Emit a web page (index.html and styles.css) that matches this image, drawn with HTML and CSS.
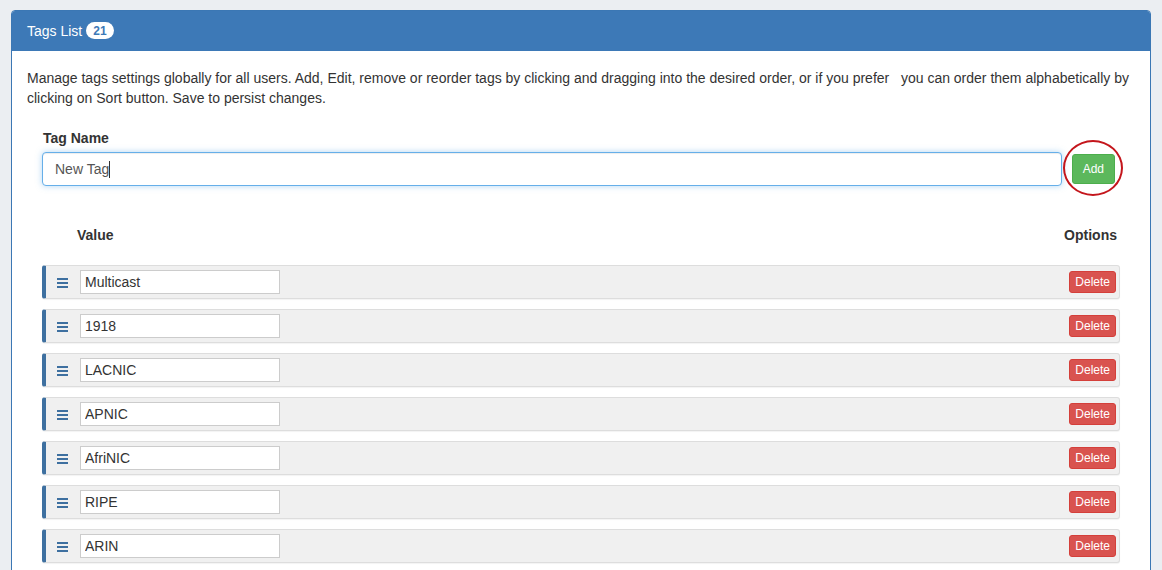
FILE: index.html
```html
<!DOCTYPE html>
<html lang="en">
<head>
    <meta charset="UTF-8">
    <meta name="viewport" content="width=device-width, initial-scale=1.0">
    <title>Tags List</title>
    <link rel="stylesheet" href="styles.css">
</head>
<body>
    <div class="panel">
        <div class="panel-heading">
            Tags List<span class="badge">21</span>
        </div>
        <div class="panel-body">
            <p class="intro">Manage tags settings globally for all users. Add, Edit, remove or reorder tags by clicking and dragging into the desired order, or if you prefer &nbsp; you can order them alphabetically by clicking on Sort button. Save to persist changes.</p>
            <div class="tags-form">
                <label for="tagName">Tag Name</label>
                <div class="add-row">
                    <div class="tag-input">
                        <input type="text" id="tagName" value="New Tag">
                        <span class="caret"></span>
                    </div>
                    <div class="add-wrap">
                        <button class="btn btn-add">Add</button>
                        <span class="highlight"></span>
                    </div>
                </div>

                <div class="list-header">
                    <span>Value</span>
                    <span>Options</span>
                </div>

                <ul class="tag-list">
                    <li class="tag-item">
                        <span class="handle"><span></span><span></span><span></span></span>
                        <input type="text" class="tag-value" value="Multicast">
                        <button class="btn btn-delete">Delete</button>
                    </li>
                    <li class="tag-item">
                        <span class="handle"><span></span><span></span><span></span></span>
                        <input type="text" class="tag-value" value="1918">
                        <button class="btn btn-delete">Delete</button>
                    </li>
                    <li class="tag-item">
                        <span class="handle"><span></span><span></span><span></span></span>
                        <input type="text" class="tag-value" value="LACNIC">
                        <button class="btn btn-delete">Delete</button>
                    </li>
                    <li class="tag-item">
                        <span class="handle"><span></span><span></span><span></span></span>
                        <input type="text" class="tag-value" value="APNIC">
                        <button class="btn btn-delete">Delete</button>
                    </li>
                    <li class="tag-item">
                        <span class="handle"><span></span><span></span><span></span></span>
                        <input type="text" class="tag-value" value="AfriNIC">
                        <button class="btn btn-delete">Delete</button>
                    </li>
                    <li class="tag-item">
                        <span class="handle"><span></span><span></span><span></span></span>
                        <input type="text" class="tag-value" value="RIPE">
                        <button class="btn btn-delete">Delete</button>
                    </li>
                    <li class="tag-item">
                        <span class="handle"><span></span><span></span><span></span></span>
                        <input type="text" class="tag-value" value="ARIN">
                        <button class="btn btn-delete">Delete</button>
                    </li>
                </ul>
            </div>
        </div>
    </div>
</body>
</html>
```

FILE: styles.css
```css
body {
    margin: 0;
    padding: 10px 10px 0 11px;
    background-color: #ebeef2;
    font-family: "Liberation Sans", Arial, Helvetica, sans-serif;
    font-size: 14px;
    line-height: 20px;
    color: #333;
}
.panel {
    width: 1140px;
    box-sizing: border-box;
    background-color: #fff;
    border: 1px solid #3b77b4;
    border-radius: 4px 4px 0 0;
}
.panel-heading {
    background-color: #3d79b7;
    color: #fff;
    padding: 10px 15px 10px 15px;
    border-radius: 3px 3px 0 0;
}
.badge {
    display: inline-block;
    margin-left: 4px;
    padding: 2px 7px 1px;
    background-color: #fff;
    color: #3d79b7;
    font-size: 12px;
    font-weight: bold;
    line-height: 14px;
    border-radius: 10px;
    vertical-align: 1px;
}
.panel-body {
    padding: 17px 15px 15px;
}
.intro {
    margin: 0 0 20px 0;
}
.tags-form {
    padding: 0 15px;
}
label {
    display: block;
    font-weight: bold;
    margin-bottom: 4px;
    margin-left: 1px;
}
.add-row {
    display: flex;
    align-items: center;
    gap: 10px;
}
.tag-input {
    position: relative;
    flex: 1;
}
.tag-input input {
    display: block;
    width: 100%;
    height: 34px;
    box-sizing: border-box;
    padding: 6px 12px;
    font-family: inherit;
    font-size: 14px;
    color: #555;
    border: 1px solid #66afe9;
    border-radius: 4px;
    outline: none;
    box-shadow: inset 0 1px 1px rgba(0, 0, 0, .075), 0 0 6px rgba(102, 175, 233, .5);
}
.caret {
    position: absolute;
    left: 67px;
    top: 9px;
    width: 1px;
    height: 17px;
    background-color: #333;
}
.add-wrap {
    position: relative;
    margin-right: 5px;
}
.btn {
    display: block;
    font-family: inherit;
    color: #fff;
    cursor: pointer;
    border-radius: 3px;
}
.btn-add {
    height: 30px;
    padding: 5px 10px;
    font-size: 12px;
    line-height: 18px;
    background-color: #5cb85c;
    border: 1px solid #4cae4c;
}
.highlight {
    position: absolute;
    left: -9px;
    top: -14px;
    width: 56px;
    height: 52px;
    border: 2px solid #c4161c;
    border-radius: 50%;
}
.list-header {
    display: flex;
    justify-content: space-between;
    margin-top: 28px;
    padding: 11px 3px 9px 35px;
    font-weight: bold;
}
.tag-list {
    list-style: none;
    margin: 11px 0 0 0;
    padding: 0;
}
.tag-item {
    display: flex;
    align-items: center;
    height: 34px;
    box-sizing: border-box;
    margin-bottom: 10px;
    padding: 0 3px 0 11px;
    background-color: #f0f0f0;
    border: 1px solid #ddd;
    border-left: 4px solid #3e70a0;
    border-radius: 3px;
    box-shadow: 0 1px 1px rgba(0, 0, 0, .05);
}
.handle {
    display: flex;
    flex-direction: column;
    gap: 2px;
    width: 11px;
    margin-right: 12px;
    margin-top: 2px;
}
.handle span {
    display: block;
    height: 2px;
    background-color: #3e70a0;
}
.tag-value {
    width: 200px;
    height: 24px;
    box-sizing: border-box;
    padding: 1px 4px;
    font-family: inherit;
    font-size: 14px;
    color: #333;
    background-color: #fff;
    border: 1px solid #ccc;
}
.btn-delete {
    margin-left: auto;
    height: 22px;
    padding: 1px 5px;
    font-size: 12px;
    line-height: 18px;
    background-color: #d9534f;
    border: 1px solid #d43f3a;
}
```
